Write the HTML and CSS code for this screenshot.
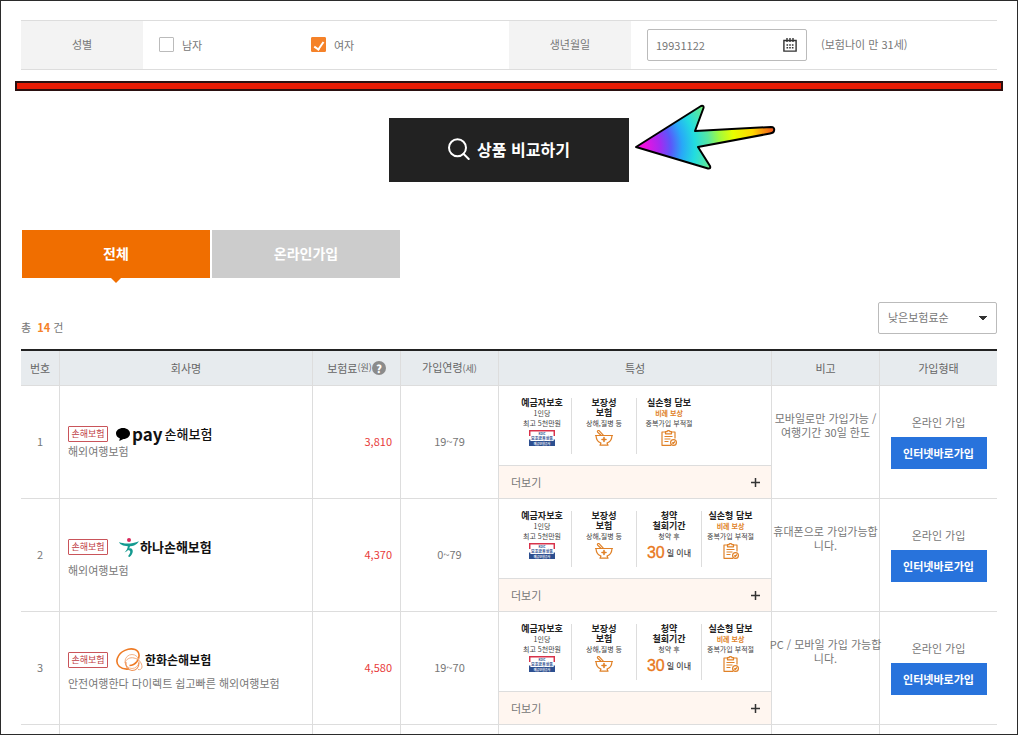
FILE: index.html
```html
<!DOCTYPE html>
<html lang="ko">
<head>
<meta charset="utf-8">
<title>여행자보험 상품 비교</title>
<link rel="stylesheet" href="styles.css">
</head>
<body>
<svg class="sprite" aria-hidden="true">
  <symbol id="deposit" viewBox="0 0 26 16">
    <path d="M.7 6V.8h24.6V6" fill="none" stroke="#d8324a" stroke-width="1.5"/>
    <path d="M0 9.500h1.400V11h23.200V9.500H26V16H0z" fill="#2d4f90"/>
    <text class="mark-kdic" x="13" y="4.800">KDIC</text>
    <text class="mark-name" x="13" y="9.600">보호금융상품</text>
    <text class="mark-org" x="13" y="14.600">예금보험공사</text>
  </symbol>
  <symbol id="bowl" viewBox="0 0 20 16">
    <g fill="none" stroke="#e08127" stroke-width="1.200" stroke-linecap="round" stroke-linejoin="round">
      <path d="M1.500 5.500h17M2 5.700c.3 4 2.500 6.500 5 7.300l-1 2.200h8l-1-2.200c2.500-.8 4.700-3.300 5-7.300"/>
      <path d="M7 5.300 3.700 2.200C2.800 1.200 4.300-.1 5.300.8L9.500 5.300"/>
      <path d="M10 7.500v4M8 9.500h4" stroke-width="1.600"/>
    </g>
  </symbol>
  <symbol id="clip" viewBox="0 0 16 16">
    <g fill="none" stroke="#e08127" stroke-width="1.200" stroke-linejoin="round">
      <path d="M4.500 2H1v13.300h9M10.500 2H14v6.500"/>
      <path d="M4.500 3.800V1.700H6C6 .2 9 .2 9 1.700h1.500v2.100z"/>
      <path d="M3.500 6.500h8M3.500 9h6M3.500 11.500h4"/>
      <circle cx="12.500" cy="12.500" r="2.900"/>
      <path d="m11.200 12.500 1 1 1.700-2"/>
    </g>
  </symbol>
</svg>
<main class="frame">
  <form class="filters">
    <div class="filter">
      <div class="filter-label">성별</div>
      <div class="filter-body">
        <label class="check"><input type="checkbox">남자</label>
        <label class="check"><input type="checkbox" checked>여자</label>
      </div>
    </div>
    <div class="filter">
      <label class="filter-label" for="birth">생년월일</label>
      <div class="filter-body">
        <span class="date">
          <input id="birth" type="text" value="19931122">
          <button type="button" aria-label="달력">
            <svg viewBox="0 0 14 14" width="14" height="14"><g fill="none" stroke="#333" stroke-width="1.400"><path d="M.9 2.500h12.200v10.600H.9zM4 0v4M7 0v4M10 0v4"/><path d="M3.500 7h7M3.500 9.800h7" stroke-dasharray="1.600 1.100"/></g></svg>
          </button>
        </span>
        <span class="age">(보험나이 만 31세)</span>
      </div>
    </div>
  </form>
  <div class="redline"></div>
  <div class="search-row">
    <button class="search" type="button">
      <svg viewBox="0 0 22 22" width="22" height="22"><g fill="none" stroke="#fff" stroke-width="2" stroke-linecap="round"><circle cx="9.500" cy="9.800" r="8.500"/><path d="m15.700 16 5 5"/></g></svg>
      상품 비교하기
    </button>
    <svg class="arrow" viewBox="0 0 144 68" width="144" height="68" aria-hidden="true">
      <defs>
        <radialGradient id="rainbow" gradientUnits="userSpaceOnUse" cx="3" cy="43" r="140">
          <stop offset=".06" stop-color="#f010e0"/><stop offset=".17" stop-color="#a828f0"/><stop offset=".25" stop-color="#5a58fa"/>
          <stop offset=".33" stop-color="#28a8f8"/><stop offset=".42" stop-color="#22dce0"/><stop offset=".52" stop-color="#58e8a0"/>
          <stop offset=".6" stop-color="#a0fa40"/><stop offset=".7" stop-color="#e8ff00"/><stop offset=".84" stop-color="#ffd800"/><stop offset="1" stop-color="#f04a20"/>
        </radialGradient>
      </defs>
      <path d="M3 43 68 2q3-1 2.500 2L62 27l76-4q4 0 3 4-.5 2-4 2.500L65 43l12 19q1 3-2 2.500z" fill="url(#rainbow)" stroke="#000" stroke-width="2" stroke-linejoin="round"/>
    </svg>
  </div>
  <div class="tabs">
    <button class="tab active" type="button">전체</button>
    <button class="tab" type="button">온라인가입</button>
  </div>
  <div class="list-head">
    <p class="count">총 &nbsp;<b>14</b> 건</p>
    <select class="sort" aria-label="정렬"><option>낮은보험료순</option></select>
  </div>
  <table class="products">
    <colgroup><col class="c-no"><col><col class="c-price"><col class="c-age"><col class="c-feat"><col class="c-note"><col class="c-type"></colgroup>
    <thead>
      <tr><th>번호</th><th>회사명</th><th><span class="th-help">보험료<small>(원)</small><button class="help" type="button" aria-label="도움말">?</button></span></th><th>가입연령<small>(세)</small></th><th>특성</th><th>비고</th><th>가입형태</th></tr>
    </thead>
    <tbody>
      <tr>
        <td>1</td>
        <td class="company"><div class="brand short"><span class="badge">손해보험</span><span class="logo kakao"><svg viewBox="0 0 14 13" width="14" height="13"><path d="M7 0c4 0 7 2.400 7 5.500S11 11 7.500 11L3.300 13l.5-2.700C1.500 9.500 0 7.800 0 5.500 0 2.400 3 0 7 0z"/></svg><b>pay</b><span>손해보험</span></span></div><p>해외여행보험</p></td>
        <td class="price">3,810</td>
        <td>19~79</td>
        <td class="feature">
          <div class="traits">
            <div class="trait"><b>예금자보호</b><span>1인당</span><span>최고 5천만원</span><svg width="26" height="16"><use href="#deposit"/></svg></div>
            <div class="trait wide"><b>보장성</b><b>보험</b><span>상해,질병 등</span><svg width="20" height="16"><use href="#bowl"/></svg></div>
            <div class="trait wide"><b>실손형 담보</b><span class="orange">비례 보상</span><span>중복가입 부적절</span><svg width="16" height="16"><use href="#clip"/></svg></div>
          </div>
          <button class="more" type="button">더보기<svg viewBox="0 0 9 9" width="9" height="9"><path d="M4.500 0v9M0 4.500h9" stroke="#333" stroke-width="1.500"/></svg></button>
        </td>
        <td class="note"><p>모바일로만 가입가능 /<br>여행기간 30일 한도</p></td>
        <td class="type"><p>온라인 가입</p><a href="#">인터넷바로가입</a></td>
      </tr>
      <tr>
        <td>2</td>
        <td class="company"><div class="brand"><span class="badge">손해보험</span><span class="logo hana"><svg viewBox="0 0 20 19" width="20" height="19"><circle cx="10" cy="2" r="2" fill="#d8285a"/><g fill="#159a90"><path d="M0 4c5 2.200 13 2 20-.8-2.500 3.800-6 5-9.500 5C6 8.200 1.500 7.500 0 4z"/><path d="M9 7.500h2.200C10.500 11 9 13 5.500 14.500 7.500 12.500 8.700 10.500 9 7.500z"/><path d="M9.500 10.500c5-2 6 4.500 1 8.500-1.500-.3-1.500-1-.8-1.800 2.200-2.500 2.200-5-.8-5.200z"/></g></svg><b>하나손해보험</b></span></div><p>해외여행보험</p></td>
        <td class="price">4,370</td>
        <td>0~79</td>
        <td class="feature">
          <div class="traits">
            <div class="trait"><b>예금자보호</b><span>1인당</span><span>최고 5천만원</span><svg width="26" height="16"><use href="#deposit"/></svg></div>
            <div class="trait wide"><b>보장성</b><b>보험</b><span>상해,질병 등</span><svg width="20" height="16"><use href="#bowl"/></svg></div>
            <div class="trait wide"><b>청약</b><b>철회기간</b><span>청약 후</span><span class="days"><em>30</em>일 이내</span></div>
            <div class="trait"><b>실손형 담보</b><span class="orange">비례 보상</span><span>중복가입 부적절</span><svg width="16" height="16"><use href="#clip"/></svg></div>
          </div>
          <button class="more" type="button">더보기<svg viewBox="0 0 9 9" width="9" height="9"><path d="M4.500 0v9M0 4.500h9" stroke="#333" stroke-width="1.500"/></svg></button>
        </td>
        <td class="note"><p>휴대폰으로 가입가능합<br>니다.</p></td>
        <td class="type"><p>온라인 가입</p><a href="#">인터넷바로가입</a></td>
      </tr>
      <tr>
        <td>3</td>
        <td class="company"><div class="brand"><span class="badge">손해보험</span><span class="logo hanwha"><svg viewBox="0 0 27 24" width="27" height="24"><g fill="none"><path d="M13 21C5 22-1 17 1.500 10 4 3 13-.5 19 1.500c5 2 5 8 2 12-2 2.500-5 4-7.500 4" stroke="#ee7a24" stroke-width="1.600"/><circle cx="16" cy="13.500" r="7" stroke="#f6b68a" stroke-width="1"/><path d="M9 15c1-4 5-6 9-5 5 1 8 5 8 9 0 2-2 3-4 2.500" stroke="#f3a878" stroke-width="1"/><path d="M10 14c-1 4 2 8.500 6 8.500s7-3 7-8" stroke="#ef9052" stroke-width="1.200"/></g></svg><b>한화손해보험</b></span></div><p>안전여행한다 다이렉트 쉽고빠른 해외여행보험</p></td>
        <td class="price">4,580</td>
        <td>19~70</td>
        <td class="feature">
          <div class="traits">
            <div class="trait"><b>예금자보호</b><span>1인당</span><span>최고 5천만원</span><svg width="26" height="16"><use href="#deposit"/></svg></div>
            <div class="trait wide"><b>보장성</b><b>보험</b><span>상해,질병 등</span><svg width="20" height="16"><use href="#bowl"/></svg></div>
            <div class="trait wide"><b>청약</b><b>철회기간</b><span>청약 후</span><span class="days"><em>30</em>일 이내</span></div>
            <div class="trait"><b>실손형 담보</b><span class="orange">비례 보상</span><span>중복가입 부적절</span><svg width="16" height="16"><use href="#clip"/></svg></div>
          </div>
          <button class="more" type="button">더보기<svg viewBox="0 0 9 9" width="9" height="9"><path d="M4.500 0v9M0 4.500h9" stroke="#333" stroke-width="1.500"/></svg></button>
        </td>
        <td class="note"><p>PC / 모바일 가입 가능합<br>니다.</p></td>
        <td class="type"><p>온라인 가입</p><a href="#">인터넷바로가입</a></td>
      </tr>
      <tr><td></td><td></td><td></td><td></td><td></td><td></td><td></td></tr>
    </tbody>
  </table>
</main>
</body>
</html>
```
FILE: styles.css
```css
* { box-sizing: border-box; }
body, p { margin: 0; }
body, button, input, select {
  font-family: "Noto Sans CJK KR", "Noto Sans", sans-serif;
  font-size: 11px;
  color: #777;
}
body { line-height: 16px; background: #fff; }
button { border: 0; padding: 0; background: none; cursor: pointer; }
svg { display: block; flex: none; }
.sprite { display: none; }
.frame {
  height: 100vh;
  overflow: hidden;
  border: 1px solid #2b2b2b;
  padding: 19px 20px 0;
}

.filters {
  display: grid;
  grid-template-columns: 1fr 1fr;
  border-top: 1px solid #ddd;
  border-bottom: 1px solid #ddd;
}
.filter { display: flex; height: 48px; }
.filter-label {
  width: 122px;
  display: flex;
  align-items: center;
  justify-content: center;
  padding-bottom: 2px;
  background: #f3f3f3;
}
.filter-body { flex: 1; display: flex; align-items: center; padding: 0 0 1px 16px; }
.check { display: flex; align-items: center; gap: 8px; width: 152px; }
.check input {
  appearance: none;
  width: 15px;
  height: 15px;
  margin: 0;
  border: 1px solid #bbb;
  border-radius: 1px;
  display: grid;
  place-items: center;
}
.check input:checked { background: #f58229; border-color: #f58229; }
.check input:checked::after {
  content: "";
  width: 4px;
  height: 8px;
  border: solid #fff;
  border-width: 0 2px 2px 0;
  transform: rotate(35deg);
}
.date {
  display: flex;
  align-items: center;
  width: 160px;
  height: 32px;
  padding: 0 9px 0 8px;
  border: 1px solid #bbb;
  border-radius: 2px;
}
.date input { flex: 1; min-width: 0; border: 0; padding: 0; outline: 0; background: none; }
.age { margin-left: 14px; padding-bottom: 2px; }

.redline {
  height: 10px;
  margin: 11px -6px 0;
  border: 2px solid #2a1010;
  background: #e91c05;
}
.search-row { position: relative; width: 240px; margin: 27px auto 0; }
.search {
  display: flex;
  align-items: center;
  justify-content: center;
  gap: 7px;
  width: 100%;
  height: 64px;
  padding-bottom: 2px;
  background: #222;
  color: #fff;
  font-size: 16px;
  font-weight: 700;
}
.arrow { position: absolute; left: calc(100% + 4px); top: -14px; }

.tabs { display: flex; gap: 2px; margin: 48px 0 0 1px; }
.tab {
  position: relative;
  width: 188px;
  height: 48px;
  padding-bottom: 2px;
  background: #ccc;
  color: #fff;
  font-size: 14px;
  font-weight: 700;
}
.tab.active { background: #f06e00; }
.tab.active::after {
  content: "";
  position: absolute;
  top: 100%;
  left: calc(50% - 5px);
  border: 5px solid transparent;
  border-top-color: #f06e00;
  border-bottom: 0;
}
.list-head { display: flex; justify-content: space-between; align-items: flex-end; margin: 24px 0 15px; }
.count { line-height: 14px; }
.count b { color: #f58229; }
.sort {
  appearance: none;
  width: 119px;
  height: 32px;
  padding: 0 9px 2px;
  border: 1px solid #bbb;
  border-radius: 2px;
  background: conic-gradient(from -45deg at 50% 100%, #333 90deg, transparent 0) right 9px center / 8px 4px no-repeat #fff;
}

.products { width: 100%; table-layout: fixed; border-collapse: separate; border-spacing: 0; border-top: 2px solid #222; }
.c-no { width: 39px; }
.c-price { width: 88px; }
.c-age { width: 98px; }
.c-feat { width: 273px; }
.c-note { width: 108px; }
.c-type { width: 117px; }
.products th {
  height: 35px;
  padding: 0;
  background: #e7ebee;
  font-weight: 400;
  color: #666;
  border-bottom: 1px solid #ddd;
  border-right: 1px solid #ddd;
}
.products small { font-size: 9px; }
.products td {
  padding: 0 0 2px;
  height: 10px;
  text-align: center;
  border-bottom: 1px solid #ddd;
  border-right: 1px solid #ddd;
}
.products th:last-child, .products td:last-child { border-right: 0; }
.th-help { display: flex; align-items: center; justify-content: center; }
.help { width: 14px; height: 14px; border-radius: 50%; background: #8b8b8b; color: #fff; font-weight: 900; line-height: 14px; }
.products .company { text-align: left; padding: 0 0 0 8px; }
.brand { display: flex; align-items: center; gap: 8px; height: 30px; }
.brand.short { height: 18px; }
.badge {
  width: 40px;
  height: 16px;
  border: 1px solid #c9545a;
  border-radius: 1px;
  color: #c03c44;
  font-size: 9px;
  line-height: 14px;
  text-align: center;
}
.logo { display: flex; align-items: center; color: #111; }
.kakao { font-size: 13px; font-weight: 500; gap: 2px; }
.kakao b { font-size: 17px; line-height: 18px; font-weight: 700; }
.hana { gap: 1px; padding-left: 3px; font-size: 13px; }
.hanwha { gap: 2px; font-size: 12px; }
.products .price { text-align: right; padding-right: 8px; color: #e83a3a; }

.products .feature { vertical-align: top; padding: 0; }
.traits { display: flex; height: 79px; padding: 12px 0 0 14px; }
.trait {
  display: flex;
  flex-direction: column;
  align-items: center;
  width: 58px;
  height: 56px;
  color: #444;
  font-size: 7px;
  line-height: 10px;
  white-space: nowrap;
}
.trait.wide { width: 65px; }
.trait + .trait { border-left: 1px solid #ddd; }
.trait b { font-size: 9px; color: #222; }
.trait svg { margin-top: 2px; }
.trait .orange { color: #e08127; font-weight: 700; }
.trait .days { display: flex; align-items: center; gap: 2px; height: 20px; font-size: 8px; font-weight: 500; margin-top: 2px; }
.days em { font: 16px "Liberation Sans", sans-serif; color: #e9781c; -webkit-text-stroke: 1px #e9781c; -webkit-text-stroke-width: thin; }
.mark-kdic, .mark-name, .mark-org { text-anchor: middle; font-family: "Noto Sans CJK KR", sans-serif; font-weight: 700; fill: #2d4f90; }
.mark-kdic { font-size: 3px; }
.mark-name { font-size: 4px; }
.mark-org { font-size: 3px; fill: #fff; }
.more {
  display: flex;
  align-items: center;
  justify-content: space-between;
  width: 100%;
  height: 33px;
  padding: 0 11px 0 12px;
  border-top: 1px solid #ddd;
  background: #fff6f0;
}
.products .note { vertical-align: top; padding-top: 25px; line-height: 14px; white-space: nowrap; }
.note p { margin: 0 -4px; }
.type a {
  display: block;
  width: 96px;
  margin: 7px auto 0;
  background: #2873dc;
  color: #fff;
  font-weight: 700;
  line-height: 32px;
  text-decoration: none;
}
```
